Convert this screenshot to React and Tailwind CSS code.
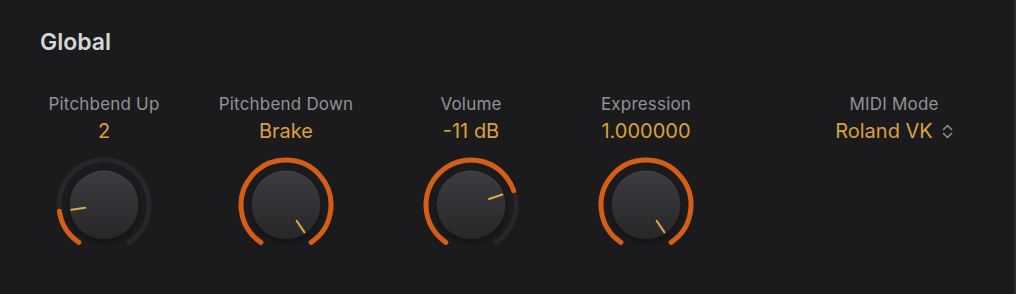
import React from 'react';

const START = -146;
const SWEEP = 292;

const pt = (r, deg) => {
  const a = (deg * Math.PI) / 180;
  return [50 + r * Math.sin(a), 50 - r * Math.cos(a)];
};

const arc = (r, from, to) => {
  const [x1, y1] = pt(r, from);
  const [x2, y2] = pt(r, to);
  const large = to - from > 180 ? 1 : 0;
  return `M ${x1} ${y1} A ${r} ${r} 0 ${large} 1 ${x2} ${y2}`;
};

const Knob = ({ id, value }) => {
  const end = START + SWEEP * value;
  const [px1, py1] = pt(19, end);
  const [px2, py2] = pt(33, end);
  return (
    <svg width="100" height="100" viewBox="0 0 100 100">
      <defs>
        <linearGradient id={`body-${id}`} x1="0" y1="0" x2="0" y2="1">
          <stop offset="0" stopColor="#3c3c40" />
          <stop offset="1" stopColor="#27272a" />
        </linearGradient>
        <linearGradient id={`rim-${id}`} x1="0" y1="0" x2="0" y2="1">
          <stop offset="0" stopColor="#4a4a4f" />
          <stop offset="0.5" stopColor="#303034" />
          <stop offset="1" stopColor="#222225" />
        </linearGradient>
        <radialGradient id={`shadow-${id}`} cx="0.5" cy="0.5" r="0.5">
          <stop offset="0.7" stopColor="#000" stopOpacity="0.45" />
          <stop offset="1" stopColor="#000" stopOpacity="0" />
        </radialGradient>
      </defs>
      <path d={arc(45, START, START + SWEEP)} fill="none" stroke="#27272b" strokeWidth="5" strokeLinecap="round" />
      {value > 0 && (
        <path d={arc(45, START, end)} fill="none" stroke="#d45d17" strokeWidth="5" strokeLinecap="round" />
      )}
      <circle cx="50" cy="53" r="39" fill={`url(#shadow-${id})`} />
      <circle cx="50" cy="50" r="34.5" fill={`url(#rim-${id})`} />
      <circle cx="50" cy="50" r="33.8" fill={`url(#body-${id})`} />
      <line x1={px1} y1={py1} x2={px2} y2={py2} stroke="#e1a844" strokeWidth="2" strokeLinecap="round" />
    </svg>
  );
};

const Column = ({ width, label, value, children }) => (
  <div className="flex flex-col items-center shrink-0" style={{ width }}>
    <div className="text-[17px] leading-6 text-[#929296] tracking-[0.2px]">{label}</div>
    <div className="mt-[1px] text-[20px] leading-7 text-[#d9a13f] flex items-center gap-[9px]">{value}</div>
    {children}
  </div>
);

const Chevrons = () => (
  <svg width="11" height="15" viewBox="0 0 11 15" fill="none" stroke="#8e8e93" strokeWidth="1.6" strokeLinecap="round" strokeLinejoin="round">
    <path d="M1.5 5.5 L5.5 1.5 L9.5 5.5" />
    <path d="M1.5 9.5 L5.5 13.5 L9.5 9.5" />
  </svg>
);

export default function App() {
  return (
    <div className="w-[1016px] h-[294px] bg-[#1b1b1d] border-r-2 border-[#2a2a2c] font-['Inter',sans-serif] overflow-hidden">
      <div className="pl-[40px] pt-[28px] text-[23px] leading-7 font-semibold text-[#d6d6d8]">Global</div>
      <div className="flex mt-[36px] pl-[24px]">
        <Column width={160} label="Pitchbend Up" value="2">
          <div className="mt-[10px]"><Knob id="a" value={0.164} /></div>
        </Column>
        <Column width={204} label="Pitchbend Down" value="Brake">
          <div className="mt-[10px]"><Knob id="b" value={1} /></div>
        </Column>
        <Column width={166} label="Volume" value="-11 dB">
          <div className="mt-[10px]"><Knob id="c" value={0.745} /></div>
        </Column>
        <Column width={184} label="Expression" value="1.000000">
          <div className="mt-[10px]"><Knob id="d" value={1} /></div>
        </Column>
        <Column width={312} label="MIDI Mode" value={<><span>Roland VK</span><Chevrons /></>} />
      </div>
    </div>
  );
}
